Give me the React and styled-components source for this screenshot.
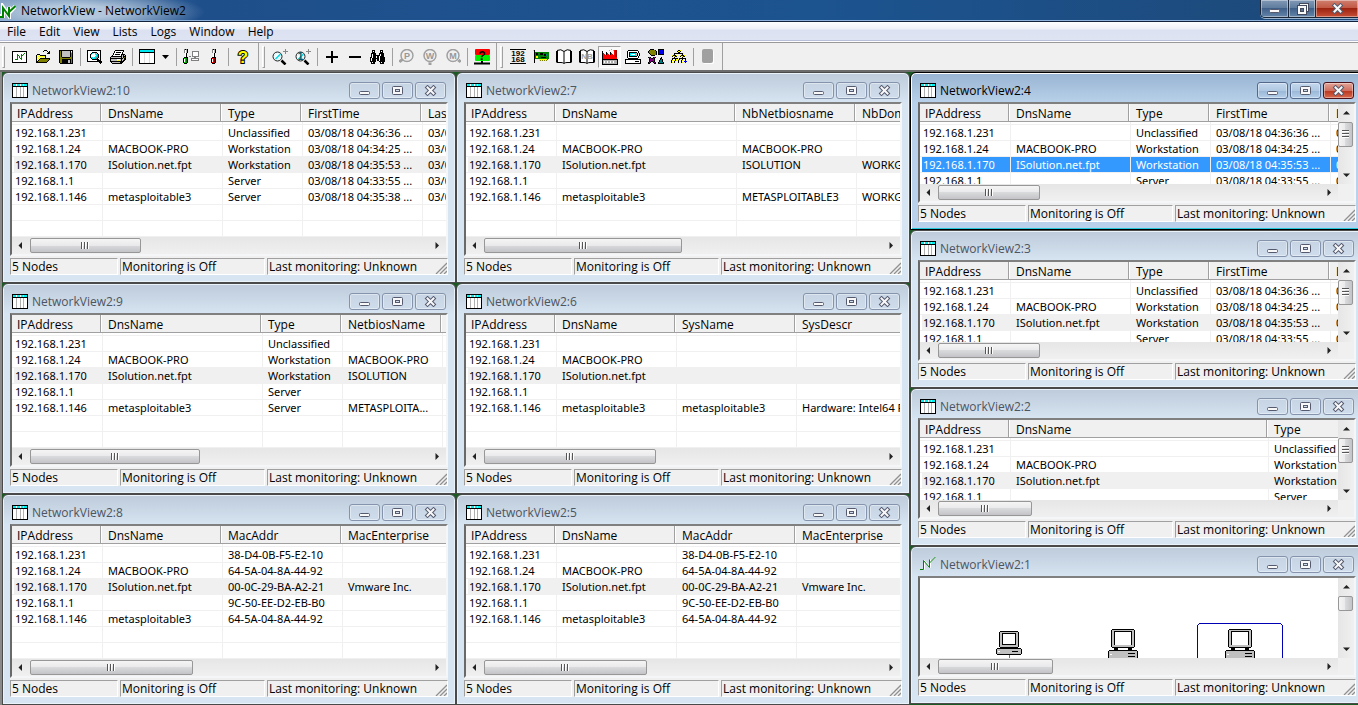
import React from 'react'
import styled, { createGlobalStyle, css } from 'styled-components'

const addresses = ['192.168.1.231', '192.168.1.24', '192.168.1.170', '192.168.1.1', '192.168.1.146']
const dnsNames = ['', 'MACBOOK-PRO', 'ISolution.net.fpt', '', 'metasploitable3']
const types = ['Unclassified', 'Workstation', 'Workstation', 'Server', 'Server']
const macs = [
  '38-D4-0B-F5-E2-10',
  '64-5A-04-8A-44-92',
  '00-0C-29-BA-A2-21',
  '9C-50-EE-D2-EB-B0',
  '64-5A-04-8A-44-92'
]
const firstTimes = ['04:36:36', '04:34:25', '04:35:53', '04:33:55', '04:35:38'].map(
  time => `03/08/18 ${time} ...`
)

const ip = { title: 'IPAddress', width: 90, values: addresses }
const dns = { title: 'DnsName', width: 120, values: dnsNames }
const type = { title: 'Type', width: 80, values: types }
const first = { title: 'FirstTime', width: 120, values: firstTimes }
const last = { title: 'LastTime', width: 120, values: firstTimes }
const mac = { title: 'MacAddr', width: 120, values: macs }
const enterprise = { title: 'MacEnterprise', width: 120, values: ['', '', 'Vmware Inc.', '', ''] }

const leftWindows = [
  { id: 10, thumb: 111, columns: [ip, dns, type, first, last] },
  {
    id: 9,
    thumb: 170,
    columns: [
      ip,
      { ...dns, width: 160 },
      type,
      { title: 'NetbiosName', width: 100, values: ['', 'MACBOOK-PRO', 'ISOLUTION', '', 'METASPLOITA...'] },
      { title: '', width: 100, values: [] }
    ]
  },
  { id: 8, thumb: 163, columns: [ip, dns, mac, enterprise] }
]

const middleWindows = [
  {
    id: 7,
    thumb: 198,
    columns: [
      ip,
      { ...dns, width: 180 },
      { title: 'NbNetbiosname', width: 120, values: ['', 'MACBOOK-PRO', 'ISOLUTION', '', 'METASPLOITABLE3'] },
      { title: 'NbDomain', width: 120, values: ['', '', 'WORKGROUP', '', 'WORKGROUP'] }
    ]
  },
  {
    id: 6,
    thumb: 172,
    columns: [
      ip,
      dns,
      { title: 'SysName', width: 120, values: ['', '', '', '', 'metasploitable3'] },
      { title: 'SysDescr', width: 200, values: ['', '', '', '', 'Hardware: Intel64 Family 6'] }
    ]
  },
  { id: 5, thumb: 163, columns: [ip, dns, mac, enterprise] }
]

const rightWindows = [
  { id: 4, thumb: 102, active: true, columns: [ip, dns, type, first, last] },
  { id: 3, thumb: 102, columns: [ip, dns, type, first, last] },
  { id: 2, thumb: 94, columns: [ip, { ...dns, width: 258 }, type] }
]

const menu = ['File', 'Edit', 'View', 'Lists', 'Logs', 'Window', 'Help']

export default function App() {
  return (
    <Page>
      <GlobalStyle />
      <TitleBar>
        <AppLogo />
        <AppTitle>NetworkView - NetworkView2</AppTitle>
        <AppControls>
          <AppControl aria-label="Minimize">
            <MinimizeGlyph />
          </AppControl>
          <AppControl aria-label="Restore">
            <RestoreGlyph />
          </AppControl>
          <AppControl aria-label="Close" $close>
            <CloseGlyph />
          </AppControl>
        </AppControls>
      </TitleBar>
      <MenuBar>
        {menu.map(item => (
          <MenuItem key={item}>{item}</MenuItem>
        ))}
      </MenuBar>
      <Toolbars />
      <Workspace>
        <WindowColumn>
          {leftWindows.map(win => (
            <ListWindow key={win.id} {...win} />
          ))}
        </WindowColumn>
        <WindowColumn>
          {middleWindows.map(win => (
            <ListWindow key={win.id} {...win} />
          ))}
        </WindowColumn>
        <WindowColumn $short>
          {rightWindows.map(win => (
            <ListWindow key={win.id} {...win} vertical />
          ))}
          <ChildWindow id={1} logo>
            <ViewRow>
              <Viewport>
                <NetworkMap />
              </Viewport>
              <VerticalScroll size={15} />
            </ViewRow>
            <HorizontalScroll size={115} corner />
          </ChildWindow>
        </WindowColumn>
      </Workspace>
    </Page>
  )
}

function ListWindow({ id, thumb, columns, active, vertical }) {
  return (
    <ChildWindow id={id} active={active}>
      <ViewRow>
        <Viewport>
          <NodeTable columns={columns} active={active} />
        </Viewport>
        {vertical && <VerticalScroll size={25} grip />}
      </ViewRow>
      <HorizontalScroll size={thumb} corner={vertical} />
    </ChildWindow>
  )
}

function ChildWindow({ id, active, logo, children }) {
  return (
    <Frame $active={active}>
      <Caption>
        {logo ? <ViewLogo /> : <ListGlyph />}
        <CaptionText $active={active}>NetworkView2:{id}</CaptionText>
        <CaptionButton aria-label="Minimize" $active={active}>
          <MinimizeGlyph />
        </CaptionButton>
        <CaptionButton aria-label="Maximize" $active={active}>
          <MaximizeGlyph />
        </CaptionButton>
        <CaptionButton aria-label="Close" $active={active} $close={active}>
          <CloseGlyph />
        </CaptionButton>
      </Caption>
      <Client>{children}</Client>
      <StatusBar>
        <StatusPane $width={108}>5 Nodes</StatusPane>
        <StatusPane $width={145}>Monitoring is Off</StatusPane>
        <StatusPane>
          Last monitoring: Unknown
          <SizeGrip />
        </StatusPane>
      </StatusBar>
    </Frame>
  )
}

function NodeTable({ columns, active }) {
  const width = columns.reduce((sum, column) => sum + column.width, 0)
  return (
    <Table $width={width}>
      <colgroup>
        {columns.map((column, i) => (
          <Col key={i} $width={column.width} />
        ))}
      </colgroup>
      <thead>
        <tr>
          {columns.map((column, i) => (
            <HeaderCell key={i}>{column.title}</HeaderCell>
          ))}
        </tr>
      </thead>
      <tbody>
        <SpacerRow>
          {columns.map((column, i) => (
            <td key={i} />
          ))}
        </SpacerRow>
        {[0, 1, 2, 3, 4, 5, 6].map(row => (
          <Row key={row} $marked={row === 2} $selected={active && row === 2}>
            {columns.map((column, i) => (
              <Cell key={i}>{column.values[row]}</Cell>
            ))}
          </Row>
        ))}
      </tbody>
    </Table>
  )
}

function HorizontalScroll({ size, corner }) {
  return (
    <ScrollRow>
      <Track>
        <ScrollButton aria-label="Scroll left">
          <Glyph width="5" height="7" viewBox="0 0 5 7">
            <path d="M4 0v7L.5 3.500z" fill="#222" />
          </Glyph>
        </ScrollButton>
        <Thumb $size={size}>
          <Glyph width="9" height="7" viewBox="0 0 9 7">
            <path d="M0 0h1v7H0zM3 0h1v7H3zM6 0h1v7H6z" fill="#555" />
            <path d="M1 0h1v7H1zM4 0h1v7H4zM7 0h1v7H7z" fill="#fff" />
          </Glyph>
        </Thumb>
        <Spring />
        <ScrollButton aria-label="Scroll right">
          <Glyph width="5" height="7" viewBox="0 0 5 7">
            <path d="M.5 0v7L4 3.500z" fill="#222" />
          </Glyph>
        </ScrollButton>
      </Track>
      {corner && <Corner />}
    </ScrollRow>
  )
}

function VerticalScroll({ size, grip }) {
  return (
    <Track $vertical>
      <ScrollButton aria-label="Scroll up">
        <Glyph width="7" height="5" viewBox="0 0 7 5">
          <path d="M0 4.500h7L3.500 1z" fill="#222" />
        </Glyph>
      </ScrollButton>
      <Thumb $size={size} $vertical>
        {grip && (
          <Glyph width="7" height="9" viewBox="0 0 7 9">
            <path d="M0 0h7v1H0zM0 3h7v1H0zM0 6h7v1H0z" fill="#555" />
            <path d="M0 1h7v1H0zM0 4h7v1H0zM0 7h7v1H0z" fill="#fff" />
          </Glyph>
        )}
      </Thumb>
      <Spring />
      <ScrollButton aria-label="Scroll down">
        <Glyph width="7" height="5" viewBox="0 0 7 5">
          <path d="M0 .5h7L3.500 4z" fill="#222" />
        </Glyph>
      </ScrollButton>
    </Track>
  )
}

function NetworkMap() {
  return (
    <Glyph width="418" height="80" viewBox="0 0 418 80" shapeRendering="crispEdges">
      <rect x="89" y="77" width="1" height="3" fill="#00a078" />
      {/* small computer */}
      <g>
        <path d="M80 53h18v1h1v15h-1v1H80v-1h-1V54h1z" fill="#000" />
        <rect x="80" y="54" width="18" height="15" fill="#c0c0c0" />
        <rect x="82" y="55" width="14" height="12" fill="#000" />
        <rect x="83" y="56" width="12" height="10" fill="#fff" />
        <rect x="82" y="69" width="3" height="2" fill="#000" />
        <rect x="93" y="69" width="3" height="2" fill="#000" />
        <path d="M77 70h24v1h1v5h-1v1H77v-1h-1v-5h1z" fill="#000" />
        <rect x="77" y="71" width="24" height="5" fill="#c0c0c0" />
        <rect x="78" y="73" width="2" height="1" fill="#fff" />
        <rect x="92" y="73" width="6" height="1" fill="#000" />
      </g>
      <DesktopNode x={188} />
      <DesktopNode x={305} />
      <path d="M277.500 80V47.500l2-2h81l2 2V80" fill="none" stroke="#0000b4" />
    </Glyph>
  )
}

function DesktopNode({ x }) {
  return (
    <g transform={`translate(${x} 51)`}>
      <path d="M4 0h22v1h1v17h-1v1H4v-1H3V1h1z" fill="#000" />
      <rect x="4" y="1" width="22" height="17" fill="#c0c0c0" />
      <rect x="6" y="2" width="18" height="14" fill="#000" />
      <rect x="7" y="3" width="16" height="13" fill="#fff" />
      <rect x="6" y="18" width="4" height="3" fill="#000" />
      <rect x="20" y="18" width="4" height="3" fill="#000" />
      <path d="M1 21h28v1h1v7H0v-7h1z" fill="#000" />
      <rect x="1" y="22" width="28" height="7" fill="#c0c0c0" />
      <rect x="2" y="25" width="2" height="1" fill="#fff" />
      <rect x="20" y="24" width="7" height="1" fill="#000" />
      <rect x="20" y="27" width="7" height="1" fill="#000" />
    </g>
  )
}

const palette = {
  k: '#000',
  w: '#fff',
  g: '#808080',
  s: '#c0c0c0',
  c: '#00e8f0',
  y: '#ffff90',
  l: '#ffff00',
  o: '#808000',
  r: '#f00',
  R: '#900000',
  D: '#008000',
  G: '#00d000',
  b: '#0000f0',
  m: '#800080',
  t: '#008080'
}

// Each letter of a row is one pixel of the icon, a dot is left clear.
function Pixels({ rows }) {
  const width = Math.max(...rows.map(row => row.length))
  return (
    <Glyph width={width} height={rows.length} viewBox={`0 0 ${width} ${rows.length}`} shapeRendering="crispEdges">
      {rows.map((row, y) =>
        [...row].map(
          (letter, x) =>
            palette[letter] && <rect key={`${x}-${y}`} x={x} y={y} width="1" height="1" fill={palette[letter]} />
        )
      )}
    </Glyph>
  )
}

const art = {
  New: [
    'kkkkkkkkkkkkkkk',
    'kwwwwwwwwwwwwwk',
    'kwwwwwwwwwwwDwk',
    'kwwwwDwwwDwDwwk',
    'kwwwwDDwwDDwwwk',
    'kwwwwDwDwDwwwwk',
    'kwwwwDwDwDwwwwk',
    'kwwwwDwwDDwwwwk',
    'kwwDDDwwwDwwwwk',
    'kwwwwwwwwwwwwwk',
    'kwwwwwwwwwwwwwk',
    'kkkkkkkkkkkkkkk'
  ],
  Open: [
    '.........kkk...',
    '........k...k.k',
    '.............kk',
    '............kkk',
    '..kkk..........',
    '.klylkkkkkk....',
    '.kylylylylk....',
    '.klylylylyk....',
    '.kylykkkkkkkkkk',
    '.klykoooooooook',
    '.kykoooooooook.',
    '.kkoooooooook..',
    '.kkkkkkkkkkk...'
  ],
  Save: [
    'kkkkkkkkkkkkkk',
    'koksssssssskwk',
    'kokssssssssksk',
    'koksssssssskok',
    'koksssssssskok',
    'koksssssssskok',
    'koksssssssskok',
    'kookkkkkkkkook',
    'kooooooooooook',
    'kookkkkkkkkkok',
    'kookkkkkksskok',
    'kookkkkkksskok',
    'kookkkkkksskok',
    '.kkkkkkkkkkkkk'
  ],
  Preview: [
    'kkkkkkkkkkkkkk.',
    'kwwwwwwwwwwwwk.',
    'kwwwwkkkkkwwwk.',
    'kwwwkcwwcskwwk.',
    'kwwkcwwwccgkwk.',
    'kwwkwwwwwcgkwk.',
    'kwwkwwwwccgkwk.',
    'kwwkccwccggkwk.',
    'kwwwkcccggkwwk.',
    'kwwwwkkkkkkkwk.',
    'kwwwwwwwwwkkkk.',
    'kkkkkkkkkkkkkkk',
    '............kkk',
    '.............k.'
  ],
  Print: [
    '.....kkkkkkkkk..',
    '....kwwwwwwwwk..',
    '....kwkkkkkwk...',
    '...kwwwwwwwwk...',
    '...kwkkkkkwkkkk.',
    '..kwwwwwwwwksksk',
    '.kkkkkkkkkkkskkk',
    'ksssssssssskskok',
    'kkkkkkkkkkkkkskk',
    'ksssssswwwsksskk',
    'ksssssslllskskk.',
    'kkkkkkkkkkkkkk..',
    '.ksssssssskkk...',
    '..kkkkkkkkkk....'
  ],
  Options: [
    '.gkgk...........',
    '.gwsk...........',
    '.gwsk....ggggggg',
    '.gwsk....gwwwwwg',
    '..wk.....gwwwwwg',
    '..wk.....gwwwwwg',
    '..wk.....gwwwwwg',
    '..wk..gg.ggggggg',
    '.kkkk......gg...',
    'kGGDk...gggggggg',
    'kwGDk...gwwwwwwg',
    'kwGDk...gggggggg',
    'kwGDk...........',
    'kGGDk...........',
    '.kkk............'
  ],
  Setup: [
    '.gkgk',
    '.gwsk',
    '.gwsk',
    '.gwsk',
    '..wk.',
    '..wk.',
    '..wk.',
    '..wk.',
    '.kkkk',
    'krrRk',
    'kwrRk',
    'kwrRk',
    'kwrRk',
    'krrRk',
    '.kkk.'
  ],
  Find: [
    '..kkk.....kkk..',
    '..kwk.....kwk..',
    '..kkk.....kkk..',
    '.kkkkk...kkkkk.',
    '.kwkkk...kwkkk.',
    '.kwkkkkkkkwkkk.',
    '.kwkkkwkkwkkkk.',
    'kkwkkkwkkwkkkkk',
    'kwkkkkkkkwkkkkk',
    'kwkkkk.kkwkkkkk',
    'kwkkkk.kkwkkkkk',
    'kkkkkk...kkkkkk',
    '.kwkk.....kwkk.',
    '.kkkk.....kkkk.'
  ],
  Card: [
    'sk..............',
    '.k..............',
    '.kDDDDDDDDDDDDDD',
    '.kDkkDDkkkDDDDDD',
    '.kDkkDDkkkDkktDD',
    '.kDDDDDDDDDkktDD',
    '.kDllDtDDDtDDDtD',
    '.kDllDDDkkkkkDDD',
    '.kDDDDDDDDDDDDDD',
    '.k....llllllllD.',
    '.k....lolololo..',
    '.k..............',
    '.k..............'
  ],
  Computer: [
    '...kkkkkkkkkk...',
    '..kwwwwwwwwwwk..',
    '..kwkkkkkkkkwk..',
    '..kwkccccccsk.k.',
    '..kwkcwwwwcskwk.',
    '..kwkccccccskwk.',
    '..kwkkkkkkkkwk..',
    '..kwwwwwwwwwwk..',
    '...kkkkkkkkkk...',
    'kkkkkkkkkkkkkkkk',
    'kwwwwwwwwwwwwwwk',
    'kwwwwwwwwwkkkkwk',
    'kwwwwwwwwwwwwwwk',
    'kkkkkkkkkkkkkkkk'
  ],
  Shapes: [
    '..kkkk....kkkkkk',
    '.koooook..kbbbbk',
    'koooooook.kbbbbk',
    'koooooook.kbbbbk',
    '.kooooook.kbbbbk',
    '..koooook.kkkkkk',
    '...kkkk.........',
    '................',
    'kmk..kmk.....k..',
    '.kmkkmk.....kk..',
    '.kmmmmk.....ktk.',
    '.kmmmmk....kttk.',
    '.kmkkmk....kttk.',
    'kmk..kmk..kttttk',
    'kk....kk..kkkkkk'
  ],
  Tree: [
    '......lkkl......',
    '......kllk......',
    '.......kk.......',
    '...kkkkkkkkkl...',
    '..lk......lk....',
    '.lkkkl...lkkkl..',
    '.kllkk...kllkk..',
    '...k.......k....',
    '.kkkkkk.kkkkkkk.',
    'lk..kl.lk.lk..k.',
    'kl.lkl.kl.kl..b.',
    'k..kl..k..k..bbb',
    'kl.k...k..kl..b.'
  ]
}

function Lens({ children }) {
  return (
    <g transform="translate(0 2)">
      <path d="M9.500 9.500l4 4" stroke="#000" strokeWidth="2.500" />
      <circle cx="5.500" cy="5.500" r="4.500" fill="#e4f8fa" stroke="#222" />
      <path d="M3 6.500L6.500 3" stroke="#fff" strokeWidth="2" />
      <path d="M3.500 8l5-5" stroke="#00d8e8" strokeWidth="1.500" />
      {children}
    </g>
  )
}

function ZoomGlyph({ actual }) {
  return (
    <Glyph width="16" height="16" viewBox="0 0 16 16">
      <Lens>
        {actual && (
          <IconText x="5.500" y="9" $size={10} $color="#005a6a">
            1
          </IconText>
        )}
      </Lens>
      <path d="M13.500 0v5M11 2.500h5" stroke="#888" />
    </Glyph>
  )
}

function DimLens({ letter, angle }) {
  return (
    <Glyph width="16" height="16" viewBox="0 0 16 16">
      <g transform={`rotate(${angle} 8 6.500)`}>
        <path d="M8 12v4.500" stroke="#a0a0a0" strokeWidth="3" />
      </g>
      <circle cx="8.500" cy="7" r="6" fill="none" stroke="#fff" />
      <circle cx="8" cy="6.500" r="6" fill="#efefef" stroke="#a0a0a0" strokeWidth="1.500" />
      <IconText x="8" y="10" $size={9} $color="#989898">
        {letter}
      </IconText>
    </Glyph>
  )
}

function BookGlyph({ text }) {
  return (
    <Glyph width="16" height="15" viewBox="0 0 16 15">
      <path d="M1 2.500q4-3 7 0q3-3 7 0v11H1z" fill="#fff" />
      <path
        d="M.5 2v11.500M1.500 2v11.500M15.500 2v11.500M14.500 2v11.500M8 2.500V14M1 1.500q4-2 7 1q3-3 7-1M1 13.500h4q2 0 3 1q1-1 3-1h4"
        fill="none"
        stroke="#000"
      />
      {text && (
        <IconText x="8" y="10" $size={8} $color="#a0a0a0">
          {text}
        </IconText>
      )}
    </Glyph>
  )
}

function FactoryGlyph() {
  return (
    <Glyph width="16" height="16" viewBox="0 0 16 16" shapeRendering="crispEdges">
      <path d="M0 3h1v1h1v1h1v1h1V3h1v1h1v1h1v1h1V3h1v1h1v1h1v1h1V1h3v10H0z" fill="#f00" />
      <path d="M0 2h1v8H0zM4 3h1v3H4zM8 3h1v3H8z" fill="#000" />
      <rect x="13" y="1" width="2" height="7" fill="#900" />
      <path d="M7 1h1v1H7zM9 0h1v1H9zM11 1h1v1h-1z" fill="#aaa" />
      <rect x="0" y="10" width="16" height="6" fill="#000" />
      <rect x="1" y="11" width="14" height="4" fill="#b0b0b0" />
      <path d="M2 12h1v2H2zM5 12h1v2H5zM8 12h1v2H8zM11 12h1v2h-1z" fill="#fff" />
    </Glyph>
  )
}

function ListGlyph() {
  return (
    <Glyph width="16" height="15" viewBox="0 0 16 15" shapeRendering="crispEdges">
      <rect width="16" height="15" fill="#000" />
      <rect x="1" y="1" width="14" height="13" fill="#fff" />
      <path d="M1 1h3v2H1zM5 1h3v2H5zM9 1h2v2H9zM12 1h3v2h-3z" fill="#00f0f0" />
      <path d="M1 3h14v1H1z" fill="#000" />
      <path d="M4 4h1v10H4zM8 4h1v10H8zM11 4h1v10h-1z" fill="#b0b0b0" />
    </Glyph>
  )
}

function LayoutGlyph() {
  return (
    <Glyph width="16" height="15" viewBox="0 0 16 15" shapeRendering="crispEdges">
      <rect width="16" height="15" fill="#000" />
      <rect x="1" y="1" width="14" height="13" fill="#fff" />
      <rect x="1" y="1" width="14" height="2" fill="#00e8f0" />
      <rect x="1" y="3" width="14" height="1" fill="#000" />
      <path d="M5 4h1v10H5zM10 4h1v10h-1z" fill="#dcdcdc" />
    </Glyph>
  )
}

function ViewLogo() {
  return (
    <Glyph width="16" height="15" viewBox="0 0 16 15">
      <path d="M1 12.500h3.500v-9l6 7v-8M10.500 5L16 0" fill="none" stroke="#fff" />
      <path d="M0 12.500h3.500v-9l6 7v-8M9.500 6L15.500 0" fill="none" stroke="#008000" />
    </Glyph>
  )
}

function AppLogo() {
  return (
    <Glyph width="16" height="16" viewBox="0 0 16 16">
      <path d="M0 13h3V4l6 9V4l1 5 5.500-6" fill="none" stroke="#fff" strokeWidth="4" />
      <path d="M0 14h3V5l6 8V4M9 9l6.500-6" fill="none" stroke="#008000" strokeWidth="2" />
    </Glyph>
  )
}

function MinimizeGlyph() {
  return (
    <Glyph width="13" height="11" viewBox="0 0 13 11">
      <rect x="1.500" y="6.500" width="10" height="3" rx="1" fill="#f8f8f8" stroke="#555a6e" />
    </Glyph>
  )
}

function MaximizeGlyph() {
  return (
    <Glyph width="13" height="11" viewBox="0 0 13 11">
      <rect x="1.500" y="1.500" width="10" height="8" rx="1" fill="#f8f8f8" stroke="#555a6e" />
      <rect x="4.500" y="4.500" width="4" height="2" fill="#d4e0f0" stroke="#555a6e" />
    </Glyph>
  )
}

function RestoreGlyph() {
  return (
    <Glyph width="13" height="13" viewBox="0 0 13 13">
      <rect x="3.500" y="1.500" width="9" height="8" fill="#f8f8f8" stroke="#444a5e" />
      <rect x="1.500" y="3.500" width="9" height="9" fill="#f8f8f8" stroke="#444a5e" />
      <rect x="4.500" y="6.500" width="3" height="3" fill="#5a7090" stroke="#444a5e" />
    </Glyph>
  )
}

function CloseGlyph() {
  return (
    <Glyph width="13" height="11" viewBox="0 0 13 11">
      <path d="M3.500 2.500l6 6M9.500 2.500l-6 6" stroke="#555a6e" strokeWidth="4" strokeLinecap="square" />
      <path d="M3.500 2.500l6 6M9.500 2.500l-6 6" stroke="#f8f8f8" strokeWidth="2" strokeLinecap="square" />
    </Glyph>
  )
}

function SizeGrip() {
  return (
    <Glyph width="12" height="12" viewBox="0 0 12 12">
      <path d="M1 12L12 1M5 12l7-7M9 12l3-3" stroke="#909090" strokeWidth="1.300" />
    </Glyph>
  )
}

function Toolbars() {
  return (
    <ToolbarRow>
      <Band>
        <Grip />
        <Tool label="New" />
        <Tool label="Open" />
        <Tool label="Save" />
        <Divider />
        <Tool label="Preview" />
        <Tool label="Print" />
        <Divider />
        <ToolButton aria-label="Layout">
          <LayoutGlyph />
        </ToolButton>
        <ToolButton aria-label="Choose layout" $narrow>
          <Glyph width="7" height="4" viewBox="0 0 7 4">
            <path d="M0 0h7L3.500 4z" fill="#000" />
          </Glyph>
        </ToolButton>
        <Divider />
        <Tool label="Options" />
        <Tool label="Setup" />
        <Divider />
        <ToolButton aria-label="Help">
          <Glyph width="14" height="18" viewBox="0 0 14 18">
            <HelpMark x="7" y="15">
              ?
            </HelpMark>
          </Glyph>
        </ToolButton>
      </Band>
      <Band>
        <Grip />
        <ToolButton aria-label="Zoom">
          <ZoomGlyph />
        </ToolButton>
        <ToolButton aria-label="Actual size">
          <ZoomGlyph actual />
        </ToolButton>
        <Divider />
        <ToolButton aria-label="Add">
          <Glyph width="12" height="12" viewBox="0 0 12 12" shapeRendering="crispEdges">
            <path d="M5 0h2v5h5v2H7v5H5V7H0V5h5z" fill="#000" />
          </Glyph>
        </ToolButton>
        <ToolButton aria-label="Remove">
          <Glyph width="12" height="12" viewBox="0 0 12 12" shapeRendering="crispEdges">
            <path d="M0 5h12v2H0z" fill="#000" />
          </Glyph>
        </ToolButton>
        <Tool label="Find" />
        <Divider />
        <ToolButton aria-label="Ports" disabled>
          <DimLens letter="P" angle={50} />
        </ToolButton>
        <ToolButton aria-label="WMI" disabled>
          <DimLens letter="W" angle={0} />
        </ToolButton>
        <ToolButton aria-label="MIB" disabled>
          <DimLens letter="M" angle={-50} />
        </ToolButton>
        <Divider />
        <ToolButton aria-label="Monitoring">
          <Glyph width="16" height="16" viewBox="0 0 16 16">
            <rect x="1" y="0" width="15" height="6" rx="1" fill="#f00" />
            <rect x="1" y="6" width="15" height="6" rx="1" fill="#00f000" />
            <path d="M0 14.500h16M8 12v3" stroke="#000" strokeWidth="2" />
            <IconText x="8" y="11" $size={12} $color="#000">
              ?
            </IconText>
          </Glyph>
        </ToolButton>
      </Band>
      <Band>
        <Grip />
        <ToolButton aria-label="Addresses">
          <Glyph width="16" height="15" viewBox="0 0 16 15">
            <path d="M0 .5h16M0 14.500h16" stroke="#000" />
            <IconText x="8" y="7" $size={8} $color="#000">
              192
            </IconText>
            <IconText x="8" y="13" $size={8} $color="#000">
              168
            </IconText>
          </Glyph>
        </ToolButton>
        <Tool label="Card" />
        <ToolButton aria-label="DNS names">
          <BookGlyph />
        </ToolButton>
        <ToolButton aria-label="NetBIOS names">
          <BookGlyph text="NB" />
        </ToolButton>
        <ToolButton aria-label="Manufacturers" aria-pressed="true" $pressed>
          <FactoryGlyph />
        </ToolButton>
        <Tool label="Computer" />
        <Tool label="Shapes" />
        <Tool label="Tree" />
        <Divider />
        <ToolButton aria-label="Stop" disabled>
          <Glyph width="12" height="15" viewBox="0 0 12 15">
            <rect x="1" y="1" width="11" height="14" rx="2" fill="#fff" />
            <rect width="11" height="14" rx="2" fill="#a0a0a0" />
          </Glyph>
        </ToolButton>
      </Band>
    </ToolbarRow>
  )
}

function Tool({ label }) {
  return (
    <ToolButton aria-label={label}>
      <Pixels rows={art[label]} />
    </ToolButton>
  )
}

const GlobalStyle = createGlobalStyle`
  * {
    box-sizing: border-box;
  }
  body {
    margin: 0;
    overflow: hidden;
  }
  body, button {
    font-family: 'Open Sans', 'Noto Sans', sans-serif;
    font-size: 12px;
    color: #000;
  }
  button {
    display: flex;
    align-items: center;
    justify-content: center;
    flex: none;
    margin: 0;
    padding: 0;
    border: none;
    background: none;
  }
`
const Page = styled.div`
  display: flex;
  flex-direction: column;
  height: 100vh;
  overflow: hidden;
  background: #1c5a24;
`
const Glyph = styled.svg`
  display: block;
  flex: none;
`
const IconText = styled.text`
  font-family: 'Liberation Sans', sans-serif;
  font-weight: bold;
  font-size: ${props => props.$size}px;
  fill: ${props => props.$color};
  text-anchor: middle;
`
const HelpMark = styled.text`
  font-family: 'Liberation Sans', sans-serif;
  font-weight: bold;
  font-size: 17px;
  fill: #ffff00;
  stroke: #000;
  stroke-width: 2px;
  paint-order: stroke;
  text-anchor: middle;
`

const TitleBar = styled.header`
  display: flex;
  align-items: center;
  height: 22px;
  flex: none;
  border-bottom: 1px solid #14233c;
  background:
    linear-gradient(transparent 20px, #8fb2dc 20px),
    radial-gradient(ellipse 130px 22px at 75px 12px, rgba(190, 208, 226, 0.9) 30%, transparent 100%),
    linear-gradient(90deg, #6b8fb8 0, #1f4f8b 200px, #1c5490 60%, #1d4878 100%);
`
const AppTitle = styled.h1`
  flex: 1;
  margin: 0;
  padding-left: 5px;
  font-size: 12px;
  font-weight: normal;
  line-height: 20px;
`
const AppControls = styled.div`
  display: flex;
  align-self: flex-start;
  height: 18px;
  border: 1px solid #1a2638;
  border-width: 0 0 1px 1px;
  border-radius: 0 0 0 5px;
  box-shadow: 0 1px 0 #9ab4d0;
  overflow: hidden;
`
const AppControl = styled.button`
  width: 27px;
  box-shadow: inset 0 0 0 1px rgba(255, 255, 255, 0.4);
  background: linear-gradient(#8199b6, #5c7a9c 50%, #40608a 50%, #6485a8);

  & + & {
    border-left: 1px solid #1a2638;
  }
  ${props =>
    props.$close &&
    css`
      width: 43px;
      background: linear-gradient(#d08070, #c05540 50%, #9c2410 50%, #c85038);
    `}
`

const MenuBar = styled.nav`
  display: flex;
  align-items: center;
  gap: 1px;
  height: 21px;
  flex: none;
  padding-left: 1px;
  border-bottom: 1px solid #9a9a9a;
  box-shadow: inset 0 -1px 0 #fff, inset 0 -2px 0 #b8bfd8;
  background: linear-gradient(#fff, #eef1f8 7px, #dce1f1 8px, #e0e5f4);
`
const MenuItem = styled.button`
  padding: 0 6px;
  line-height: 18px;
`

const ToolbarRow = styled.div`
  display: flex;
  height: 29px;
  flex: none;
  background: #f0f0f0;
  border-bottom: 2px solid #6c6c6c;
`
const Band = styled.div`
  display: flex;
  align-items: center;
  padding: 0 3px;
  border-right: 1px solid #a0a0a0;

  &:first-child {
    padding: 0 4px 0 2px;
  }
`
const Grip = styled.div`
  width: 3px;
  height: 22px;
  margin-right: 3px;
  border: 1px solid #a0a0a0;
  border-left-color: #fff;
  border-top-color: #fff;
`
const ToolButton = styled.button`
  width: ${props => (props.$narrow ? 15 : 23)}px;
  height: 22px;
  ${props =>
    props.$pressed &&
    css`
      border: 1px solid #a0a0a0;
      border-right-color: #fff;
      border-bottom-color: #fff;
      background: #f8f8f8;
    `}
`
const Divider = styled.div`
  width: 1px;
  height: 18px;
  margin: 0 2px 0 3px;
  background: #a0a0a0;
`

const Workspace = styled.main`
  display: grid;
  grid-template-columns: repeat(3, 1fr);
  flex: 1;
  min-height: 0;
  margin-right: -6px;
  padding-left: 2px;
  background: linear-gradient(90deg, #8a8a8a 2px, #1c5a24 2px);
`
const WindowColumn = styled.div`
  display: flex;
  flex-direction: column;
  min-width: 0;
  padding-bottom: ${props => (props.$short ? 1 : 0)}px;
`
const Frame = styled.section`
  display: flex;
  flex-direction: column;
  flex: 1 1 0;
  min-height: 0;
  padding: 0 7px 7px;
  border: 1px solid #4a4a4a;
  border-radius: 6px 6px 0 0;
  box-shadow: inset 0 0 0 1px #eaf2fa;
  background: linear-gradient(#bdcbda, #d7e4f2 30px);
  ${props =>
    props.$active &&
    css`
      border-color: #000;
      box-shadow: inset 0 1px 0 #fff, inset 1px 0 0 #fff, inset 0 -1px 0 #28c8dc;
      background: linear-gradient(#98b4d2, #b9d1ea 30px);
    `}
`
const Caption = styled.div`
  display: flex;
  align-items: center;
  gap: 2px;
  height: 29px;
  flex: none;
  padding: 6px 2px 0;
`
const CaptionText = styled.h2`
  flex: 1;
  margin: 0;
  padding-left: 2px;
  font-size: 12px;
  font-weight: normal;
  line-height: 18px;
  color: ${props => (props.$active ? '#000' : '#4c5560')};
`
const CaptionButton = styled.button`
  width: 31px;
  height: 17px;
  border: 1px solid ${props => (props.$active ? '#54698c' : '#8593ad')};
  border-radius: 3px;
  box-shadow: inset 0 0 0 1px rgba(255, 255, 255, 0.4);
  background: ${props =>
    props.$active ? 'linear-gradient(#c4d8ee, #b0c8e2 50%, #98b6d6 50%, #b4cfea)' : 'linear-gradient(#c6d4e4, #cfdcec)'};
  ${props =>
    props.$close &&
    css`
      border-color: #4c1018;
      background: linear-gradient(#e2a497, #d07060 50%, #b8341c 50%, #d8684c);
    `}
`

const Client = styled.div`
  display: flex;
  flex-direction: column;
  flex: 1;
  min-height: 0;
  border: 2px solid #696969;
  border-top-color: #808080;
  border-right-color: #f4f6f8;
  border-bottom-color: #f4f6f8;
  background: #fff;
`
const ViewRow = styled.div`
  display: flex;
  flex: 1;
  min-height: 0;
`
const Viewport = styled.div`
  flex: 1;
  min-width: 0;
  overflow: hidden;
`
const Table = styled.table`
  width: ${props => props.$width}px;
  table-layout: fixed;
  border-collapse: separate;
  border-spacing: 0;
`
const Col = styled.col`
  width: ${props => props.$width}px;
`
const HeaderCell = styled.th`
  height: 18px;
  padding: 2px 0 0 6px;
  border-bottom: 1px solid #a0a0a0;
  box-shadow: inset -1px 0 0 #fff, inset -2px 0 0 #a0a0a0;
  background: #f0f0f0;
  font-weight: normal;
  line-height: 15px;
  text-align: left;
  white-space: nowrap;

  &:first-child {
    padding-left: 5px;
  }
`
const SpacerRow = styled.tr`
  td {
    height: 3px;
    padding: 0;
    border-bottom: 1px solid #f0f0f0;
  }
  td + td {
    border-left: 1px solid #f0f0f0;
  }
`
const Cell = styled.td`
  height: 16px;
  padding: 0 0 0 5px;
  border-bottom: 1px solid #f0f0f0;
  border-left: 1px solid #f0f0f0;
  font-family: 'Noto Sans', 'Open Sans', sans-serif;
  font-size: 11px;
  line-height: 15px;
  white-space: nowrap;

  &:first-child {
    padding-left: 2px;
    border-left: none;
    text-indent: 1px;
    background-clip: content-box;
  }
`
const Row = styled.tr`
  ${Cell} {
    background-color: ${props => (props.$selected ? '#3399ff' : props.$marked ? '#f0f0f0' : 'transparent')};
    color: ${props => (props.$selected ? '#fff' : '#000')};
  }
`

const ScrollRow = styled.div`
  display: flex;
  height: 17px;
  flex: none;
`
const Track = styled.div`
  display: flex;
  flex: ${props => (props.$vertical ? 'none' : 1)};
  flex-direction: ${props => (props.$vertical ? 'column' : 'row')};
  width: ${props => (props.$vertical ? '16px' : 'auto')};
  background: linear-gradient(${props => (props.$vertical ? '90deg, ' : '')}#e6e6e6, #f0f0f0);
`
const ScrollButton = styled.button`
  width: 17px;
  height: 17px;
`
const Thumb = styled.div`
  display: flex;
  align-items: center;
  justify-content: center;
  flex: none;
  width: ${props => (props.$vertical ? '15px' : `${props.$size}px`)};
  height: ${props => (props.$vertical ? `${props.$size}px` : '15px')};
  margin: 1px;
  margin-left: ${props => (props.$vertical ? 0 : 1)}px;
  border: 1px solid #979797;
  border-radius: 2px;
  background: linear-gradient(
    ${props => (props.$vertical ? '90deg, ' : '')}#f5f5f5,
    #e9e9eb 50%,
    #d9dadc 50%,
    #c4c4c8
  );
`
const Spring = styled.div`
  flex: 1;
`
const Corner = styled.div`
  width: 16px;
  background: #f0f0f0;
`

const StatusBar = styled.footer`
  display: flex;
  gap: 2px;
  height: 19px;
  flex: none;
  padding-top: 2px;
  background: #f0f0f0;
`
const StatusPane = styled.div`
  display: flex;
  justify-content: space-between;
  align-items: flex-end;
  flex: ${props => (props.$width ? `0 0 ${props.$width}px` : 1)};
  padding-left: 1px;
  border: 1px solid #a0a0a0;
  border-right-color: #fff;
  border-bottom-color: #fff;
  line-height: 15px;
  white-space: nowrap;
`
